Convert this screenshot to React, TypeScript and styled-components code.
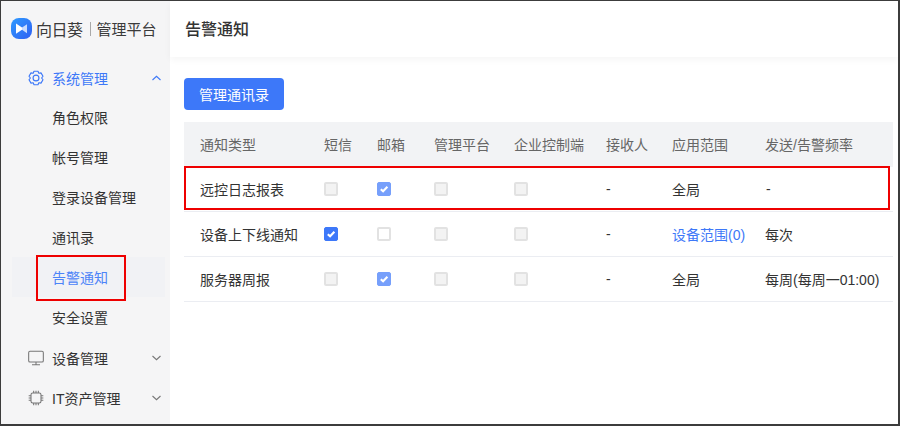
import React from "react";
import styled, { createGlobalStyle } from "styled-components";

const Global = createGlobalStyle`
  html, body { margin: 0; padding: 0; background: #fff; }
  * { box-sizing: border-box; }
`;

const Frame = styled.div`
  position: relative;
  width: 900px;
  height: 426px;
  border: 1px solid #3c3c3c;
  border-width: 1px 2px 2px 1px;
  display: flex;
  overflow: hidden;
  background: #fff;
  font-family: "Liberation Sans", "Noto Sans CJK SC", sans-serif;
  font-size: 14px;
  color: #333;
`;

const Sidebar = styled.aside`
  width: 169px;
  flex: none;
  background: #f5f5f6;
  display: flex;
  flex-direction: column;
`;

const Brand = styled.div`
  height: 56px;
  padding: 0 0 1px 10px;
  display: flex;
  align-items: center;
  color: #3a3a3a;
  font-size: 16px;
  letter-spacing: -0.5px;
`;

const BrandDivider = styled.span`
  width: 1px;
  height: 14px;
  background: #a9a9a9;
  margin: 0 6px 0 7px;
`;

const BrandPlatform = styled.span`
  font-size: 15px;
  letter-spacing: 0;
`;

const BrandLogo = styled.svg`
  width: 21px;
  height: 21px;
  margin-right: 4px;
  flex: none;
`;

const Menu = styled.nav`
  padding-top: 1px;
  display: flex;
  flex-direction: column;
`;

const MenuGroup = styled.div<{ $active?: boolean; $first?: boolean }>`
  height: ${(p) => (p.$first ? "39px" : "40px")};
  margin-top: ${(p) => (p.$first ? "0" : "1px")};
  margin-bottom: ${(p) => (p.$first ? "0" : "-1px")};
  padding: 0 9px 0 27px;
  display: flex;
  align-items: center;
  color: ${(p) => (p.$active ? "#3d78f8" : "#333")};
  svg.main { width: 16px; height: 16px; margin-right: 8px; flex: none; }
  svg.chev { margin-left: auto; flex: none; }
`;

const MenuLabel = styled.span`
  flex: none;
`;

const MenuItem = styled.div<{ $active?: boolean }>`
  height: 40px;
  margin: 0 5px 0 11px;
  padding-left: 40px;
  display: flex;
  align-items: center;
  color: ${(p) => (p.$active ? "#4d84f8" : "#333")};
  background: ${(p) => (p.$active ? "#f1f2f5" : "transparent")};
`;

const Main = styled.main`
  flex: 1;
  min-width: 0;
  display: flex;
  flex-direction: column;
`;

const Header = styled.header`
  height: 56px;
  flex: none;
  padding: 0 0 2px 15px;
  display: flex;
  align-items: center;
  font-size: 16px;
  color: #333;
  font-weight: 500;
  box-shadow: 0 3px 7px rgba(0, 0, 0, 0.04);
`;

const Content = styled.div`
  padding: 21px 5px 0 14px;
`;

const PrimaryButton = styled.button`
  display: block;
  width: 100px;
  height: 32px;
  border: 0;
  border-radius: 4px;
  padding: 0;
  background: #3d78f9;
  color: #fff;
  font: inherit;
`;

const Table = styled.div`
  margin-top: 12px;
`;

const Row = styled.div<{ $head?: boolean }>`
  display: grid;
  grid-template-columns: 124px 53px 57px 80px 92px 66px 93px 1fr;
  align-items: center;
  height: 45px;
  padding-left: 16px;
  padding-bottom: ${(p) => (p.$head ? "2px" : "0")};
  background: ${(p) => (p.$head ? "#f2f3f5" : "#fff")};
  color: ${(p) => (p.$head ? "#666" : "#333")};
  border-bottom: ${(p) => (p.$head ? "0" : "1px solid #ebedf2")};
`;

const Cell = styled.div`
  white-space: nowrap;
`;

const Dash = styled.span`
  padding-left: 1px;
`;

const LinkText = styled.span`
  color: #3d78f8;
`;

const Box = styled.span<{ $state: "off" | "disabled" | "on" | "onDisabled" }>`
  display: block;
  width: 14px;
  height: 14px;
  border-radius: 2px;
  border: ${(p) =>
    p.$state === "on"
      ? "1px solid #3d78f9"
      : p.$state === "onDisabled"
        ? "1px solid #769ffb"
        : "2px solid #e2e2e2"};
  background: ${(p) =>
    p.$state === "on"
      ? "#3d78f9"
      : p.$state === "onDisabled"
        ? "#769ffb"
        : p.$state === "disabled"
          ? "#f3f3f3"
          : "#fff"};
  position: relative;
  svg { position: absolute; left: 1px; top: 1px; width: 10px; height: 10px; }
`;

const Outline = styled.div<{ $x: number; $y: number; $w: number; $h: number }>`
  position: absolute;
  left: ${(p) => p.$x}px;
  top: ${(p) => p.$y}px;
  width: ${(p) => p.$w}px;
  height: ${(p) => p.$h}px;
  border: 2px solid #ee0000;
  pointer-events: none;
`;

type S = "off" | "disabled" | "on" | "onDisabled";

const Check = ({ s }: { s: S }) => (
  <Box $state={s}>
    {(s === "on" || s === "onDisabled") && (
      <svg viewBox="0 0 10 10" fill="none">
        <path d="M1.8 5.2 L4.1 7.3 L8.4 2.8" stroke="#fff" strokeWidth="2.1" />
      </svg>
    )}
  </Box>
);

const Chevron = ({ up }: { up?: boolean }) => (
  <svg className="chev" width="9" height="6" viewBox="0 0 9 6" fill="none">
    <path
      d={up ? "M.5 5 L4.5 1.3 L8.5 5" : "M.5 1 L4.5 4.7 L8.5 1"}
      stroke="currentColor"
      strokeOpacity={up ? 1 : 0.65}
      strokeWidth="1.1"
    />
  </svg>
);

const rows: {
  name: string;
  checks: S[];
  scope: React.ReactNode;
  freq: React.ReactNode;
}[] = [
  {
    name: "远控日志报表",
    checks: ["disabled", "onDisabled", "disabled", "disabled"],
    scope: "全局",
    freq: <Dash>-</Dash>,
  },
  {
    name: "设备上下线通知",
    checks: ["on", "off", "disabled", "disabled"],
    scope: <LinkText>设备范围(0)</LinkText>,
    freq: "每次",
  },
  {
    name: "服务器周报",
    checks: ["disabled", "onDisabled", "disabled", "disabled"],
    scope: "全局",
    freq: "每周(每周一01:00)",
  },
];

export default function App() {
  return (
    <>
      <Global />
      <Frame>
        <Sidebar>
          <Brand>
            <BrandLogo viewBox="0 0 21 21">
              <defs>
                <linearGradient id="lg" x1="0" y1="0" x2="1" y2="1">
                  <stop offset="0" stopColor="#2f9bff" />
                  <stop offset="1" stopColor="#2f5ff2" />
                </linearGradient>
              </defs>
              <rect width="21" height="21" rx="8" fill="url(#lg)" />
              <path d="M5 5.5 L11 9.6 V11.8 L5 15.8 Z" fill="#fff" />
              <path d="M11 9.6 L16 6.2 V15.2 L11 11.8 Z" fill="#c9dcff" />
            </BrandLogo>
            向日葵
            <BrandDivider />
            <BrandPlatform>管理平台</BrandPlatform>
          </Brand>
          <Menu>
            <MenuGroup $active $first>
              <svg className="main" viewBox="0 0 24 24" fill="none" stroke="currentColor" strokeWidth="1.7" strokeLinejoin="round">
                <path d="M9 1.8 H15 L16.2 4.8 L19.5 4.3 L22.5 9.4 L20.4 12 L22.5 14.6 L19.5 19.7 L16.2 19.2 L15 22.2 H9 L7.8 19.2 L4.5 19.7 L1.5 14.6 L3.6 12 L1.5 9.4 L4.5 4.3 L7.8 4.8 Z" />
                <circle cx="12" cy="12" r="4.4" />
              </svg>
              <MenuLabel>系统管理</MenuLabel>
              <Chevron up />
            </MenuGroup>
            <MenuItem>角色权限</MenuItem>
            <MenuItem>帐号管理</MenuItem>
            <MenuItem>登录设备管理</MenuItem>
            <MenuItem>通讯录</MenuItem>
            <MenuItem $active>告警通知</MenuItem>
            <MenuItem>安全设置</MenuItem>
            <MenuGroup>
              <svg className="main" viewBox="0 0 24 24" fill="none" stroke="#777" strokeWidth="1.6">
                <rect x="1" y="2" width="22" height="16" rx="2" />
                <path d="M12 18 V22 M6 22.2 H18" />
              </svg>
              <MenuLabel>设备管理</MenuLabel>
              <Chevron />
            </MenuGroup>
            <MenuGroup>
              <svg className="main" viewBox="0 0 24 24" fill="none" stroke="#777" strokeWidth="1.6">
                <rect x="4.5" y="4.5" width="15" height="15" rx="2.5" />
                <path d="M8.5 1 V4.5 M12 1 V4.5 M15.5 1 V4.5 M8.5 19.5 V23 M12 19.5 V23 M15.5 19.5 V23 M1 8.5 H4.5 M1 12 H4.5 M1 15.5 H4.5 M19.5 8.5 H23 M19.5 12 H23 M19.5 15.5 H23" />
              </svg>
              <MenuLabel>IT资产管理</MenuLabel>
              <Chevron />
            </MenuGroup>
          </Menu>
        </Sidebar>
        <Main>
          <Header>告警通知</Header>
          <Content>
            <PrimaryButton>管理通讯录</PrimaryButton>
            <Table>
              <Row $head>
                <Cell>通知类型</Cell>
                <Cell>短信</Cell>
                <Cell>邮箱</Cell>
                <Cell>管理平台</Cell>
                <Cell>企业控制端</Cell>
                <Cell>接收人</Cell>
                <Cell>应用范围</Cell>
                <Cell>发送/告警频率</Cell>
              </Row>
              {rows.map((r) => (
                <Row key={r.name}>
                  <Cell>{r.name}</Cell>
                  {r.checks.map((c, i) => (
                    <Cell key={i}>
                      <Check s={c} />
                    </Cell>
                  ))}
                  <Cell>-</Cell>
                  <Cell>{r.scope}</Cell>
                  <Cell>{r.freq}</Cell>
                </Row>
              ))}
            </Table>
          </Content>
        </Main>
        <Outline $x={35} $y={254} $w={90} $h={46} />
        <Outline $x={183} $y={165} $w={706} $h={44} />
      </Frame>
    </>
  );
}
